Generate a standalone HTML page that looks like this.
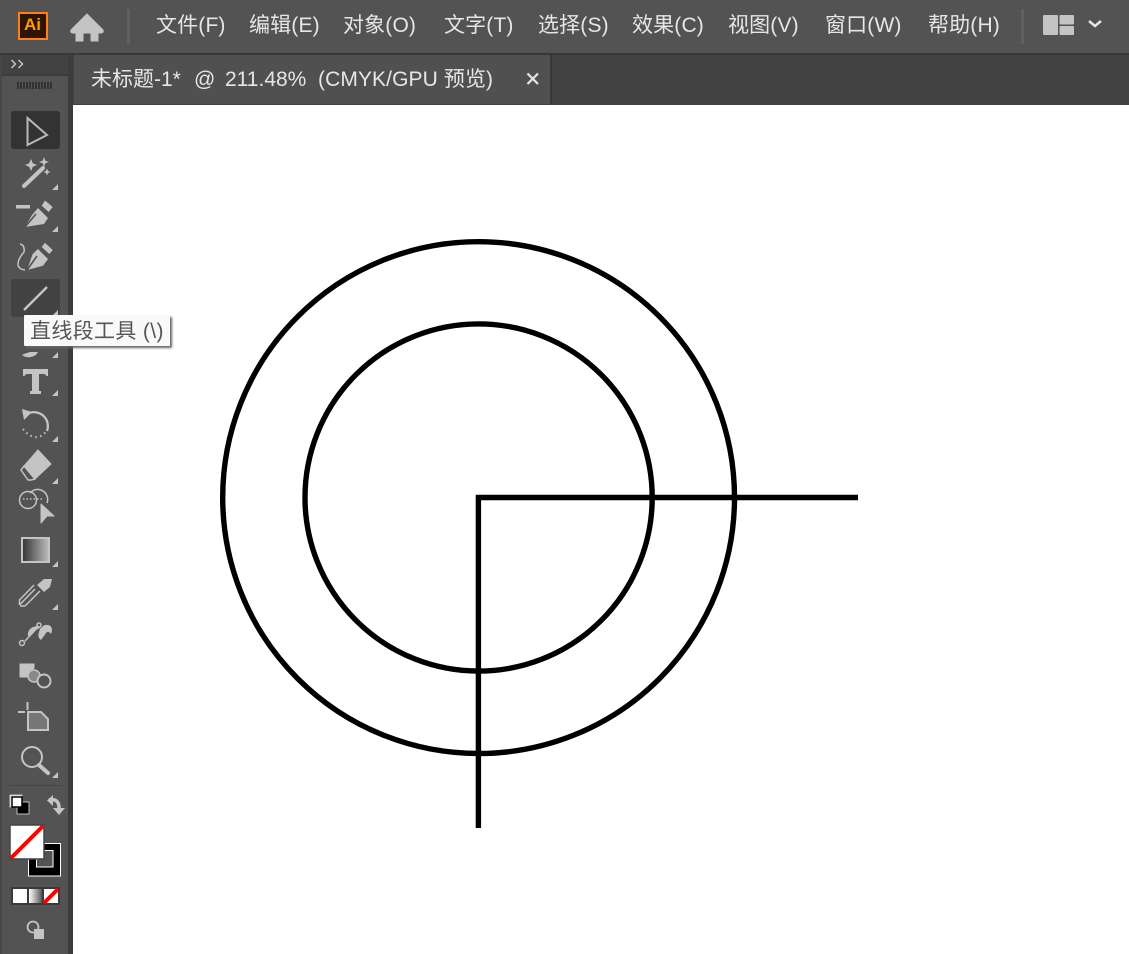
<!DOCTYPE html>
<html lang="zh"><head><meta charset="utf-8"><style>
html,body{margin:0;padding:0;background:#fff}
#r{position:relative;width:1129px;height:954px;overflow:hidden;background:#fff;font-family:"Liberation Sans","Noto Sans CJK SC",sans-serif}
#r div,#r span{position:absolute}
.m{top:12px;font-size:21px;letter-spacing:.15px;line-height:28px;color:#e6e6e6;white-space:nowrap}
</style></head><body><div id="r">
<div style="left:0;top:0;width:1129px;height:53px;background:#535353"></div>
<div style="left:0;top:53px;width:1129px;height:2px;background:#383838"></div>
<div style="left:18px;top:12px;width:26px;height:24px;border:2px solid #ff7f18;background:#2f1500"></div>
<div style="left:18px;top:12px;width:29px;height:28px;text-align:center;font-size:17px;line-height:26px;color:#ff9a00;font-weight:bold">Ai</div>
<div style="left:127px;top:9px;width:3px;height:35px;background:#606060"></div>
<div style="left:1021px;top:9px;width:3px;height:35px;background:#606060"></div>
<span class="m" style="left:156px">文件(F)</span>
<span class="m" style="left:249px">编辑(E)</span>
<span class="m" style="left:343px">对象(O)</span>
<span class="m" style="left:444px">文字(T)</span>
<span class="m" style="left:538px">选择(S)</span>
<span class="m" style="left:632px">效果(C)</span>
<span class="m" style="left:728px">视图(V)</span>
<span class="m" style="left:825px">窗口(W)</span>
<span class="m" style="left:928px">帮助(H)</span>
<div style="left:72px;top:55px;width:1057px;height:50px;background:#424242"></div>
<div style="left:74px;top:55px;width:476px;height:49px;background:#505050"></div>
<div style="left:550px;top:55px;width:2px;height:49px;background:#383838"></div>
<span style="left:91px;top:66px;font-size:21px;line-height:28px;color:#e6e6e6;white-space:nowrap">未标题-1*</span>
<span style="left:194px;top:66px;font-size:21px;line-height:28px;color:#e6e6e6;white-space:nowrap">@</span>
<span style="left:225px;top:66px;font-size:21px;line-height:28px;color:#e6e6e6;white-space:nowrap">211.48%</span>
<span style="left:318px;top:66px;font-size:21px;line-height:28px;letter-spacing:.1px;color:#e6e6e6;white-space:nowrap">(CMYK/GPU 预览)</span>
<div style="left:0;top:55px;width:73px;height:899px;background:#3c3c3c"></div>
<div style="left:0;top:55px;width:2px;height:899px;background:#474747"></div>
<div style="left:2px;top:55px;width:66px;height:19px;background:#424242"></div>
<div style="left:2px;top:76px;width:66px;height:878px;background:#535353"></div>
<div style="left:11px;top:111px;width:49px;height:38px;background:#333;border-radius:3px"></div>
<div style="left:11px;top:279px;width:49px;height:38px;background:#424242;border-radius:3px"></div>
<svg style="position:absolute;left:0;top:0" width="1129" height="954" viewBox="0 0 1129 954">
<g fill="#c4c4c4" stroke="none">
<path d="M87 14L103 30Q104 33 101 33H98V41H91V33H83V41H76V33H73Q70 33 71 30Z" stroke="#c4c4c4" stroke-linejoin="round"/>
<rect x="1043" y="15" width="15" height="20" rx="1"/><rect x="1059.500" y="15" width="14.500" height="9.500" rx="1"/><rect x="1059.500" y="26" width="14.500" height="9" rx="1"/>
<path d="M58 190v-6l-6 6zM58 232v-6l-6 6zM58 358v-6l-6 6zM58 316v-6l-6 6zM58 396v-6l-6 6zM58 442v-6l-6 6zM58 484v-6l-6 6zM58 567v-6l-6 6zM58 610v-6l-6 6zM58 778v-6l-6 6z"/>
<path d="M31 159l1.800 4.200 4.200 1.800-4.200 1.800-1.800 4.200-1.800-4.200-4.200-1.800 4.200-1.800zM44 157l1.300 3.700 3.700 1.300-3.700 1.300-1.300 3.700-1.300-3.700-3.700-1.300 3.700-1.300zM47 168.500l1 2.500 2.500 1-2.500 1-1 2.500-1-2.500-2.500-1 2.500-1z"/>
<path d="M16 205h14v3.500H16zM45 200.500l7.700 6.500-4 5-7-6.300zM38 208l10 10-4 6-19 3 7-12z"/>
<path d="M45 242.700l7.700 7.300-3.400 4-7.600-7zM38 249l10 10-5 6.700-16 4.300 5.700-16z"/>
<path d="M22 355q4-2 8-3h8q-2 4-7 5-5 1-9-2z"/>
<path d="M23 369h25v7h-1.500q-1-2-3-2H39v17h2v3H30v-3h2V374h-4.500q-2 0-3 2H23z"/>
<path d="M38 450L51 464 35 479 24 466Z" stroke="#c4c4c4" stroke-linejoin="round" stroke-width="1"/>
<path d="M41 504L54 516H47L41 523Z" stroke="#c4c4c4" stroke-width="1" stroke-linejoin="round"/>
<path d="M20 664h14v4q-4 2-5 9h-9z" stroke="#c4c4c4"/>
<path d="M18 711h7v2h-7zM26.500 702h2v8h-2z"/>
<path d="M22 409l10 3-8 8z"/>
</g>
<g fill="#333" stroke="none"><rect x="17" y="82" width="2" height="7"/><rect x="20" y="82" width="2" height="7"/><rect x="23" y="82" width="2" height="7"/><rect x="26" y="82" width="2" height="7"/><rect x="29" y="82" width="2" height="7"/><rect x="32" y="82" width="2" height="7"/><rect x="35" y="82" width="2" height="7"/><rect x="38" y="82" width="2" height="7"/><rect x="41" y="82" width="2" height="7"/><rect x="44" y="82" width="2" height="7"/><rect x="47" y="82" width="2" height="7"/><rect x="50" y="82" width="2" height="7"/></g>
<path d="M25 227L36 214" stroke="#535353" stroke-width="1.600" fill="none"/>
<path d="M27 270L37 256" stroke="#535353" stroke-width="1.600" fill="none"/>
<defs><linearGradient id="g"><stop offset="0" stop-color="#333"/><stop offset="1" stop-color="#bdbdbd"/></linearGradient>
<linearGradient id="g2"><stop offset="0" stop-color="#fff"/><stop offset="1" stop-color="#555"/></linearGradient></defs>
<g fill="none" stroke="#c4c4c4">
<path d="M11.500 60l4 4-4 4M18.500 60l4 4-4 4" stroke-width="1.500"/>
<path d="M27.500 118V145L47 135L27.500 118Z" stroke="#b8b8b8" stroke-width="2"/>
<path d="M24 186L43 168" stroke-width="4" stroke-linecap="round"/>
<path d="M24 310L47 287" stroke-width="2.500"/>
<path d="M20 244q5 1 4 8-6 7-6 12 0 5 7 6" stroke-width="1.500"/>
<path d="M29 413A14 14 0 0 1 47 431" stroke-width="2.300"/>
<path d="M23 429q5 7 12 8t12-7" stroke-width="2" stroke-dasharray="1.500 3.500"/>
<path d="M21 470l3-4 11 13-4 1h-3z" stroke-width="1.500" fill="#535353" stroke-linejoin="round"/>
<circle cx="28" cy="500" r="8.500" stroke-width="1.500"/>
<path d="M30 493a10 10 0 0 1 17 10" stroke-width="1.500"/>
<path d="M23 499h20" stroke-width="1.500" stroke-dasharray="1.500 2"/>
<rect x="22" y="538" width="27" height="24" fill="url(#g)" stroke-width="2"/>
<path d="M19.500 605L35 589M25 606L40 591M19.500 605V600L34 585M25 606H20" stroke-width="1.500"/>
<path d="M37 585L44 579H52L50 587L44 592Z" fill="#c4c4c4" stroke="none"/>
<path d="M28 636q-1-6 5-9 5-2 7 1-5 2-7 5t-5 3zM41 640q-4-3-2-8 1-5 6-7 6-1 7 4 0 3-1 5-3-4-5-1-2 3-5 7z" fill="#c4c4c4" stroke="none"/>
<path d="M25 641L38 627" stroke-width="1.500"/>
<circle cx="39" cy="625" r="2" stroke-width="1.500"/>
<circle cx="22" cy="643" r="2.500" stroke-width="1.500"/>
<circle cx="34" cy="676" r="6" fill="#888" stroke-width="1.500"/>
<circle cx="44" cy="681" r="6.500" fill="#535353" stroke-width="2"/>
<path d="M28 712h13l7 7v11H28z" fill="#777" stroke-width="2"/>
<circle cx="32" cy="757" r="10" stroke-width="2"/>
<path d="M39 765L48 773" stroke-width="4" stroke-linecap="round"/>
</g>
<path d="M9 785.500H62" stroke="#464646" stroke-width="1"/>
<rect x="10" y="795" width="12" height="12" fill="#fff" stroke="#c0c0c0" stroke-width="1"/>
<rect x="17" y="802" width="12" height="12" fill="#000" stroke="#c0c0c0" stroke-width="1"/>
<rect x="12" y="797" width="10" height="10" fill="#fff" stroke="#000" stroke-width="1.500"/>
<path d="M49 800q10-2 10 8v4" fill="none" stroke="#c4c4c4" stroke-width="3.500"/>
<path d="M53 795v11l-6-5.500zM53 808h12l-6 7z" fill="#c4c4c4"/>
<rect x="28.500" y="843.500" width="32" height="32.500" fill="#000" stroke="#fff"/>
<rect x="36.500" y="850.500" width="16.500" height="16.500" fill="#535353" stroke="#fff"/>
<rect x="10" y="825" width="34" height="34" fill="#fff" stroke="#444" stroke-width="1.500"/>
<path d="M11 858L43 826" stroke="#f00" stroke-width="4"/>
<rect x="11" y="887" width="49" height="18" fill="#3a3a3a"/>
<rect x="13" y="889" width="14" height="14" fill="#fff"/>
<rect x="29" y="889" width="13" height="14" fill="url(#g2)"/>
<rect x="44" y="889" width="14" height="14" fill="#fff"/>
<path d="M44 903L58 889" stroke="#f00" stroke-width="4"/>
<circle cx="33" cy="927" r="5.500" fill="none" stroke="#c4c4c4" stroke-width="1.800"/>
<rect x="34" y="929" width="10" height="10" fill="#c4c4c4"/>
<path d="M1089 21l6 5 6-5" fill="none" stroke="#e6e6e6" stroke-width="2.500"/>
<path d="M527.500 73.500L538 84M538 73.500L527.500 84" stroke="#e6e6e6" stroke-width="2.200"/>
<g fill="none" stroke="#000" stroke-width="5.400">
<circle cx="478.600" cy="497.600" r="255.900"/>
<circle cx="478.600" cy="497.500" r="173.600"/>
<path d="M476 497.500H858"/>
<path d="M478.400 495V828"/>
</g>
</svg>
<div style="left:24px;top:315px;width:146px;height:31px;background:#f9f9f9;border-radius:1px;box-shadow:2px 2px 2px #666"></div>
<span style="left:30px;top:318px;font-size:21px;letter-spacing:.35px;line-height:28px;color:#555;white-space:nowrap">直线段工具 (\)</span>
</div></body></html>
